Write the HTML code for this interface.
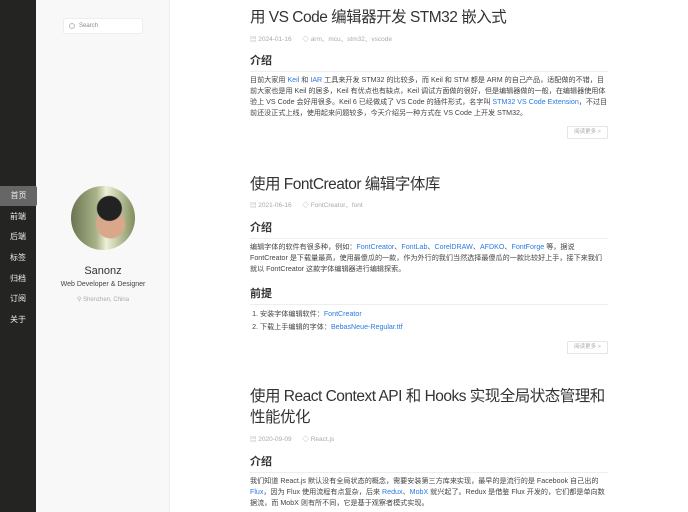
<!DOCTYPE html>
<html><head><meta charset="utf-8"><style>
*{margin:0;padding:0;box-sizing:border-box}
body{width:688px;height:512px;overflow:hidden;background:#fff;font-family:"Liberation Sans","Noto Sans CJK SC",sans-serif;color:#333;position:relative}
.dark{position:absolute;left:0;top:0;width:36px;height:512px;background:#242422}
.light{position:absolute;left:36px;top:0;width:134px;height:512px;background:#f8f8f8;border-right:1px solid #eee}
.nav{position:absolute;left:0;width:36px;height:20px;line-height:20px;text-align:center;color:#eee;font-size:8px;}
.nav.act{background:#666;width:37px;border-radius:0 2px 2px 0}
.search{position:absolute;left:63px;top:18px;width:80px;height:16px;background:#fff;border:1px solid #eee;border-radius:2px;font-size:6px;color:#888;line-height:14px;padding-left:15px}
.search:before{content:"";position:absolute;left:5px;top:4px;width:4px;height:4px;border:1px solid #bbb;border-radius:50%}
.av{position:absolute;left:71px;top:186px;width:64px;height:64px;border-radius:50%;background:radial-gradient(circle at 60% 35%,#222 0 12px,transparent 13px),radial-gradient(ellipse at 62% 60%,#d9a88a 0 14px,transparent 15px),linear-gradient(90deg,#6a7450,#a9b48a 40%,#eef0d8 55%,#7f8d5c)}
.name{position:absolute;left:36px;width:134px;text-align:center}
.a{position:absolute;left:250px;width:358px}
h1{font-size:15.5px;letter-spacing:-0.5px;font-weight:normal;color:#333;line-height:21px}
.meta{font-size:6.5px;color:#aaa}
h2{font-size:11px;font-weight:bold;color:#333;border-bottom:1px solid #eee;padding-bottom:3px}
p,li{font-size:7.1px;line-height:11px;color:#444}
a{color:#2a7ae2;text-decoration:none}
.btn{position:absolute;left:567px;width:41px;height:13px;border:1px solid #e5e5e5;font-size:5.5px;color:#aaa;text-align:center;line-height:11px;border-radius:1px}
ol{padding-left:10px}
</style></head><body>
<div class="dark"></div><div class="light"></div>
<div class="search">Search</div>
<div class="nav act" style="top:186px">首页</div>
<div class="nav" style="top:207px">前端</div>
<div class="nav" style="top:227px">后端</div>
<div class="nav" style="top:248px">标签</div>
<div class="nav" style="top:269px">归档</div>
<div class="nav" style="top:289px">订阅</div>
<div class="nav" style="top:310px">关于</div>
<div class="av"></div>
<div class="name" style="top:265px;font-size:11px;color:#333">Sanonz</div>
<div class="name" style="top:281px;font-size:7px;color:#444">Web Developer &amp; Designer</div>
<div class="name" style="top:296px;font-size:6px;color:#aaa">⚲ Shenzhen, China</div>

<div class="a" style="top:7px"><h1>用 VS Code 编辑器开发 STM32 嵌入式</h1></div>
<div class="a meta" style="top:33px">▤ 2024-01-16 &nbsp;&nbsp;&nbsp;&nbsp; ◇ arm、mcu、stm32、vscode</div>
<div class="a" style="top:52px"><h2>介绍</h2></div>
<div class="a" style="top:75px"><p>目前大家用 <a>Keil</a> 和 <a>IAR</a> 工具来开发 STM32 的比较多，而 Keil 和 STM 都是 ARM 的自己产品，适配做的不错，目前大家也是用 Keil 的居多，Keil 有优点也有缺点，Keil 调试方面做的很好，但是编辑器做的一般，在编辑器使用体验上 VS Code 会好用很多。Keil 6 已经做成了 VS Code 的插件形式，名字叫 <a>STM32 VS Code Extension</a>，不过目前还没正式上线，使用起来问题较多，今天介绍另一种方式在 VS Code 上开发 STM32。</p></div>
<div class="btn" style="top:126px">阅读更多 &gt;</div>

<div class="a" style="top:174px"><h1>使用 FontCreator 编辑字体库</h1></div>
<div class="a meta" style="top:199px">▤ 2021-06-16 &nbsp;&nbsp;&nbsp;&nbsp; ◇ FontCreator、font</div>
<div class="a" style="top:219px"><h2>介绍</h2></div>
<div class="a" style="top:242px"><p>编辑字体的软件有很多种，例如：<a>FontCreator</a>、<a>FontLab</a>、<a>CorelDRAW</a>、<a>AFDKO</a>、<a>FontForge</a> 等，据说 FontCreator 是下载量最高，使用最傻瓜的一款，作为外行的我们当然选择最傻瓜的一款比较好上手，接下来我们就以 FontCreator 这款字体编辑器进行编辑探索。</p></div>
<div class="a" style="top:285px"><h2>前提</h2></div>
<div class="a" style="top:308px"><ol><li style="line-height:13px">安装字体编辑软件：<a>FontCreator</a></li><li style="line-height:13px">下载上手编辑的字体：<a>BebasNeue-Regular.ttf</a></li></ol></div>
<div class="btn" style="top:341px">阅读更多 &gt;</div>

<div class="a" style="top:386px"><h1>使用 React Context API 和 Hooks 实现全局状态管理和性能优化</h1></div>
<div class="a meta" style="top:433px">▤ 2020-09-09 &nbsp;&nbsp;&nbsp;&nbsp; ◇ React.js</div>
<div class="a" style="top:453px"><h2>介绍</h2></div>
<div class="a" style="top:476px"><p>我们知道 React.js 默认没有全局状态的概念，需要安装第三方库来实现，最早的是流行的是 Facebook 自己出的 <a>Flux</a>，因为 Flux 使用流程有点复杂，后来 <a>Redux</a>、<a>MobX</a> 就兴起了。Redux 是借鉴 Flux 开发的，它们都是单向数据流，而 MobX 则有所不同，它是基于观察者模式实现。</p></div>
</body></html>
